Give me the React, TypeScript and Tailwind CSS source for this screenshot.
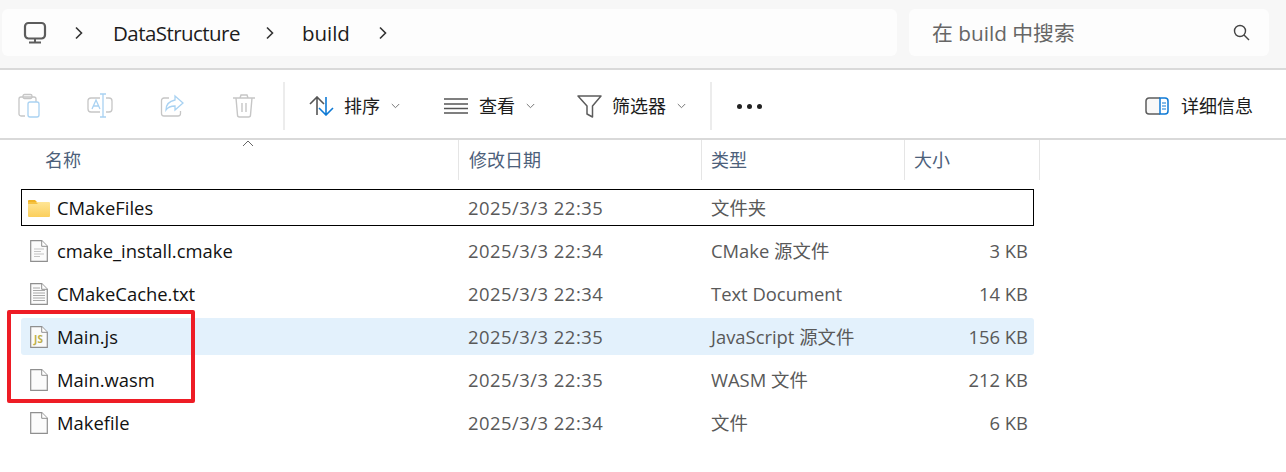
import React from "react";

const font = { fontFamily: '"Open Sans","Noto Sans CJK SC",sans-serif' };

function Chevron() {
  return (
    <svg width="10" height="14" viewBox="0 0 10 14" fill="none" stroke="#333" strokeWidth="1.6" className="shrink-0">
      <path d="M2 1.5 7.5 7 2 12.5" />
    </svg>
  );
}
function Down() {
  return (
    <svg width="9" height="6" viewBox="0 0 9 6" fill="none" stroke="#777" strokeWidth="1" className="shrink-0">
      <path d="M.8 1 4.5 4.7 8.2 1" />
    </svg>
  );
}
function Monitor() {
  return (
    <svg width="24" height="24" viewBox="0 0 24 24" fill="none" stroke="#5c5c5c" strokeWidth="2.2">
      <rect x="2" y="2" width="20" height="15.500" rx="3.500" />
      <path d="M12 17v4M6 21.500h12" strokeWidth="2" />
    </svg>
  );
}
function Paste() {
  return (
    <svg width="24" height="26" viewBox="0 0 24 26" fill="none" strokeWidth="1.3">
      <path d="M8 23H4a2 2 0 0 1-2-2V6a2 2 0 0 1 2-2h13a2 2 0 0 1 2 2v3" stroke="#c6c6c6" />
      <rect x="6" y="1.5" width="9" height="4" rx="1.5" stroke="#c6c6c6" />
      <rect x="11" y="9" width="11" height="15" rx="2" stroke="#a9d2f2" />
    </svg>
  );
}
function Rename() {
  return (
    <svg width="26" height="26" viewBox="0 0 26 26" fill="none" strokeWidth="1.3">
      <path d="M13 5H4a3 3 0 0 0-3 3v8a3 3 0 0 0 3 3h9M19 5h3a3 3 0 0 1 3 3v8a3 3 0 0 1-3 3h-3" stroke="#c6c6c6" />
      <path d="M13 1h3m3 0h-3v23m-3 0h6" stroke="#a9d2f2" />
      <path d="M5 16 9 7l4 9M6.3 13h5.4" stroke="#a9d2f2" />
    </svg>
  );
}
function Share() {
  return (
    <svg width="24" height="24" viewBox="0 0 24 24" fill="none" strokeWidth="1.3">
      <path d="M9 4H4a2.500 2.500 0 0 0-2.500 2.500v13A2.500 2.500 0 0 0 4 22h14a2.500 2.500 0 0 0 2.500-2.500V17" stroke="#c6c6c6" />
      <path d="M15 2l8 7-8 7v-4c-4 0-7 1-9 4 0-6 4-9 9-10V2Z" stroke="#a9d2f2" />
    </svg>
  );
}
function Trash() {
  return (
    <svg width="22" height="24" viewBox="0 0 22 24" fill="none" stroke="#c6c6c6" strokeWidth="1.4">
      <path d="M0 4h22M7 4l1-3h6l1 3M3 4l1.500 17a2 2 0 0 0 2 2h9a2 2 0 0 0 2-2L19 4M9 9v9M13 9v9" />
    </svg>
  );
}
function SortIcon() {
  return (
    <svg width="25" height="20" viewBox="0 0 25 20" fill="none" strokeWidth="1.6">
      <path d="M8 19V1M1 8l7-7 7 7" stroke="#555" />
      <path d="M17 1v18M10 12l7 7 7-7" stroke="#0f7ad5" />
    </svg>
  );
}
function ViewIcon() {
  return (
    <svg width="24" height="16" viewBox="0 0 24 16" fill="none" stroke="#555" strokeWidth="1.4">
      <path d="M0 1h24M0 6h24M0 10.500h24M0 15h24" />
    </svg>
  );
}
function Funnel() {
  return (
    <svg width="25" height="23" viewBox="0 0 25 23" fill="none" stroke="#5c5c5c" strokeWidth="1.5">
      <path d="M1 1h23l-8.500 10v11l-5.500-3v-8Z" strokeLinejoin="round" />
    </svg>
  );
}
function Details() {
  return (
    <svg width="24" height="18" viewBox="0 0 24 18" fill="none" strokeWidth="1.5">
      <path d="M15 1H4a3 3 0 0 0-3 3v10a3 3 0 0 0 3 3h11" stroke="#5c5c5c" fill="#f8f8f8" />
      <path d="M15 1h5a3 3 0 0 1 3 3v10a3 3 0 0 1-3 3h-5Z" stroke="#0f7ad5" />
      <path d="M17 6h4M17 9h4M17 12h4" stroke="#0f7ad5" strokeWidth="1.200" />
    </svg>
  );
}
function Search() {
  return (
    <svg width="17" height="17" viewBox="0 0 17 17" fill="none" stroke="#444" strokeWidth="1.4">
      <circle cx="7" cy="7" r="5.500" />
      <path d="m11 11 5 5" />
    </svg>
  );
}
function Folder() {
  return (
    <svg width="22" height="18" viewBox="0 0 22 18">
      <defs>
        <linearGradient id="fg" x1="0" y1="0" x2="0" y2="1">
          <stop offset="0" stopColor="#ffe596" />
          <stop offset="1" stopColor="#fbcf5c" />
        </linearGradient>
      </defs>
      <path d="M0 2a1 1 0 0 1 1-1h6l2 2h-9Z" fill="#f0b429" />
      <path d="M0 3h21a1 1 0 0 1 1 1v13a1 1 0 0 1-1 1H1a1 1 0 0 1-1-1Z" fill="url(#fg)" />
      <path d="M0 3h8l2 2H0Z" fill="#f5c242" />
    </svg>
  );
}
function FileIcon({ kind }: { kind: "blank" | "lines" | "dense" | "js" }) {
  return (
    <svg width="18" height="22" viewBox="0 0 18 22">
      <path d="M.7.700h11l5.600 5.600v15H.7Z" fill="#fbfbfb" stroke="#8f8f8f" strokeWidth="1.200" />
      <path d="M11.700.700v5.600h5.600" fill="#fff" stroke="#8f8f8f" />
      {kind === "lines" && <path d="M4 9h10M4 11.500h7M4 14h10M4 16.500h6" stroke="#c4c4c4" strokeWidth="1.200" />}
      {kind === "dense" && <path d="M3 5h7M3 7.500h12M3 10h12M3 12.500h12M3 15h12M3 17.500h12" stroke="#a8a8a8" strokeWidth="1" />}
      {kind === "js" && (
        <text x="8.500" y="16.500" textAnchor="middle" fontSize="10" fontWeight="700" fill="#bdb04a" fontFamily="Open Sans, sans-serif">JS</text>
      )}
    </svg>
  );
}

const rows = [
  { name: "CMakeFiles", date: "2025/3/3 22:35", type: "文件夹", size: "", icon: "folder", cls: "outline outline-1 -outline-offset-1 outline-black" },
  { name: "cmake_install.cmake", date: "2025/3/3 22:34", type: "CMake 源文件", size: "3 KB", icon: "lines", cls: "" },
  { name: "CMakeCache.txt", date: "2025/3/3 22:34", type: "Text Document", size: "14 KB", icon: "dense", cls: "" },
  { name: "Main.js", date: "2025/3/3 22:35", type: "JavaScript 源文件", size: "156 KB", icon: "js", cls: "bg-[#e3f1fc] rounded-[3px]" },
  { name: "Main.wasm", date: "2025/3/3 22:35", type: "WASM 文件", size: "212 KB", icon: "blank", cls: "" },
  { name: "Makefile", date: "2025/3/3 22:34", type: "文件", size: "6 KB", icon: "blank", cls: "" },
] as const;

function ToolBtn({ icon, label }: { icon: React.ReactNode; label: string }) {
  return (
    <div className="flex items-center">
      <span className="flex w-[26px] justify-center">{icon}</span>
      <span className="ml-[10px] text-[18px] text-[#1c1c1c]">{label}</span>
      <span className="ml-[11px]"><Down /></span>
    </div>
  );
}

function HeadCell({ w, label, pl }: { w: string; label: string; pl: string }) {
  return (
    <div className={`h-[40px] border-r border-[#e5e5e5] text-[18px] leading-[40px] text-[#4c607a] ${w} ${pl}`}>{label}</div>
  );
}

export default function App() {
  return (
    <div className="relative h-[472px] w-[1286px] overflow-hidden bg-white" style={font}>
      <div className="flex h-[70px] gap-[12px] border-b-2 border-[#d9d9d9] bg-[#f7f7f7] pl-[2px] pr-[17px] pt-[9px]">
        <div className="flex h-[47px] w-[895px] items-center rounded-[6px] bg-[#fdfdfd] pl-[21px]">
          <Monitor />
          <span className="ml-[27px]"><Chevron /></span>
          <span className="ml-[29px] pt-[2px] text-[20.500px] tracking-[-0.55px] text-[#1c1c1c]">DataStructure</span>
          <span className="ml-[25px]"><Chevron /></span>
          <span className="ml-[27px] pt-[2px] text-[20.500px] text-[#1c1c1c]">build</span>
          <span className="ml-[28px]"><Chevron /></span>
        </div>
        <div className="flex h-[47px] w-[360px] items-center justify-between rounded-[6px] bg-[#fdfdfd] pl-[23px] pr-[19px]">
          <span className="pt-[2px] text-[20.800px] text-[#666]">在 build 中搜索</span>
          <Search />
        </div>
      </div>

      <div className="flex h-[70px] items-center border-b-2 border-[#d9d9d9] pt-[4px] pl-[17px]">
        <div className="flex items-center"><Paste /></div>
        <div className="ml-[46px] flex items-center"><Rename /></div>
        <div className="ml-[47px] flex items-center"><Share /></div>
        <div className="ml-[49px] flex items-center"><Trash /></div>
        <div className="ml-[28px] h-[48px] w-[2px] bg-[#ececec]" />
        <div className="ml-[23px]"><ToolBtn icon={<SortIcon />} label="排序" /></div>
        <div className="ml-[43px]"><ToolBtn icon={<ViewIcon />} label="查看" /></div>
        <div className="ml-[41px]"><ToolBtn icon={<Funnel />} label="筛选器" /></div>
        <div className="ml-[24px] h-[48px] w-[2px] bg-[#ececec]" />
        <div className="ml-[25px] flex gap-[5px]">
          <span className="h-[5px] w-[5px] rounded-full bg-[#222]" />
          <span className="h-[5px] w-[5px] rounded-full bg-[#222]" />
          <span className="h-[5px] w-[5px] rounded-full bg-[#222]" />
        </div>
        <div className="ml-auto flex items-center pr-[33px]">
          <Details />
          <span className="ml-[12px] text-[18px] text-[#1c1c1c]">详细信息</span>
        </div>
      </div>

      <div className="relative flex h-[40px]">
        <HeadCell w="w-[459px]" pl="pl-[45px]" label="名称" />
        <HeadCell w="w-[243px]" pl="pl-[10px]" label="修改日期" />
        <HeadCell w="w-[203px]" pl="pl-[9px]" label="类型" />
        <HeadCell w="w-[135px]" pl="pl-[9px]" label="大小" />
        <svg className="absolute left-[242px] top-0" width="12" height="7" viewBox="0 0 12 7" fill="none" stroke="#666" strokeWidth="1">
          <path d="M1 6l5-5 5 5" />
        </svg>
      </div>

      <div className="ml-[21px] mt-[9px] flex w-[1013px] flex-col gap-[6px]">
        {rows.map((r) => (
          <div key={r.name} className={`flex h-[37px] items-center text-[18.400px] text-[#595959] ${r.cls}`}>
            <span className="flex w-[36px] shrink-0 justify-center">
              {r.icon === "folder" ? <Folder /> : <FileIcon kind={r.icon} />}
            </span>
            <span className="w-[411px] text-[#111]">{r.name}</span>
            <span className="w-[243px] tracking-[0.5px]">{r.date}</span>
            <span className="w-[200px]">{r.type}</span>
            <span className="w-[117px] text-right">{r.size}</span>
          </div>
        ))}
      </div>

      <div className="pointer-events-none absolute left-[7px] top-[310px] h-[93px] w-[188px] rounded-[2px] border-4 border-[#ee1c25]" />
    </div>
  );
}
